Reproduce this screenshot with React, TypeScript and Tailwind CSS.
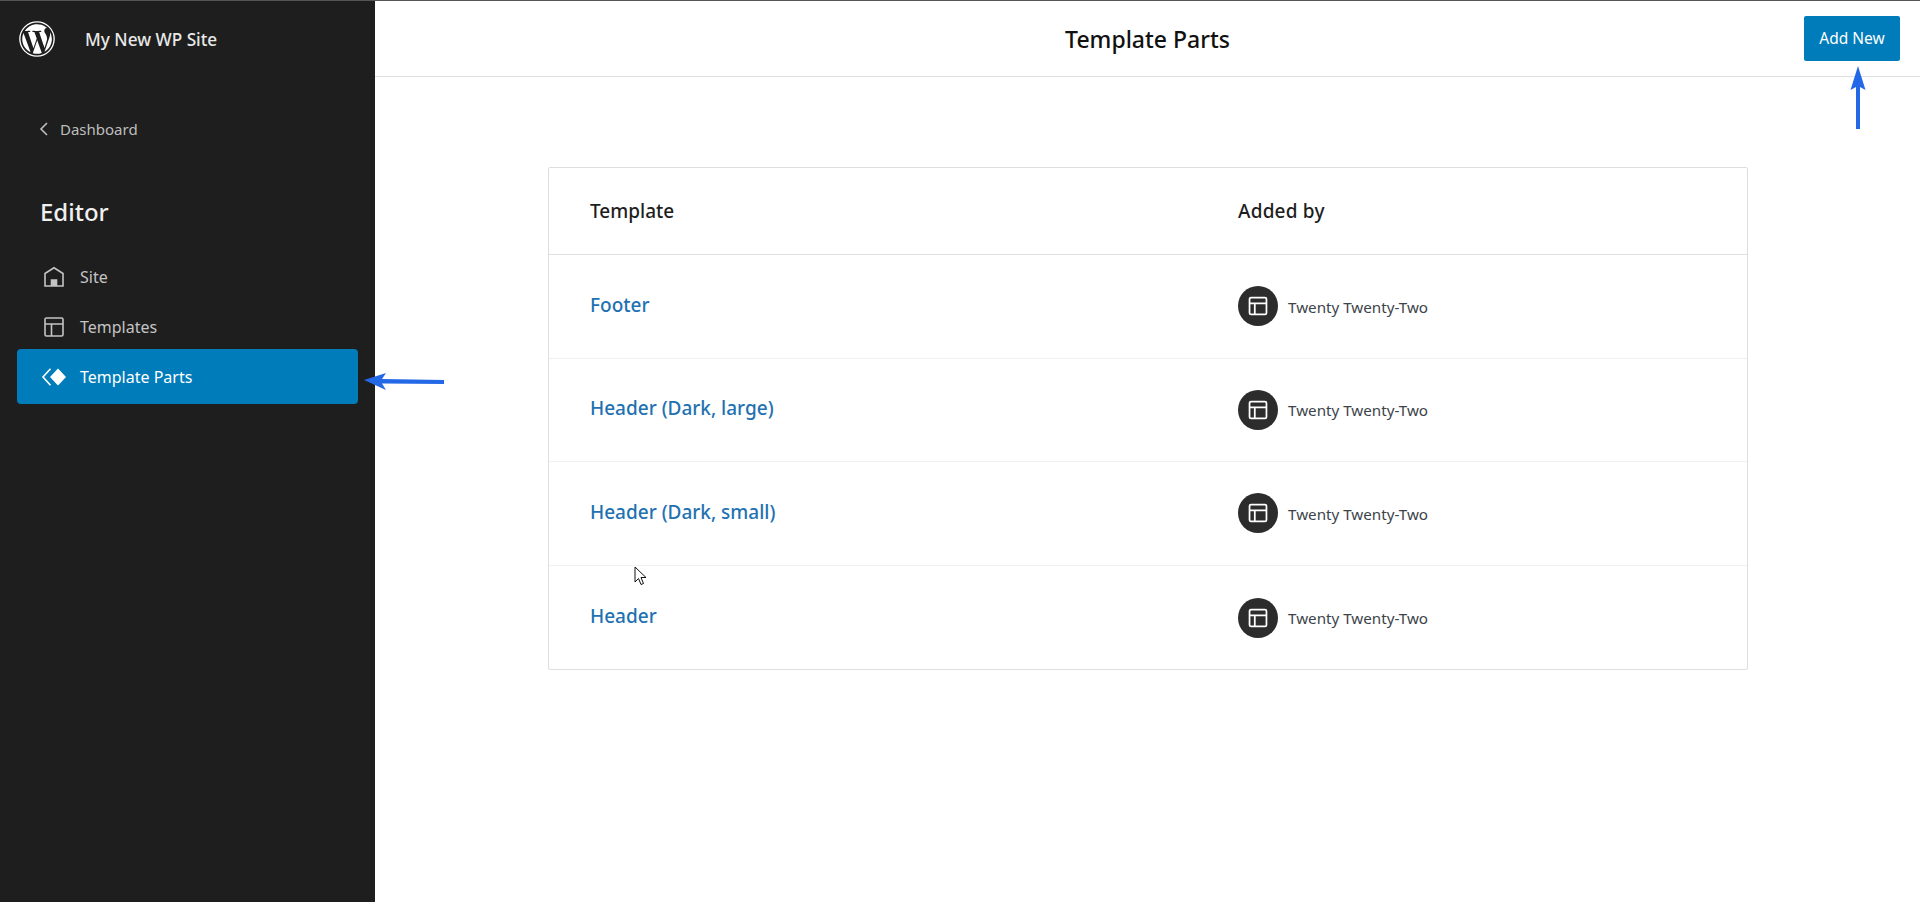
const FONT = 'font-["Noto_Sans","Liberation_Sans",sans-serif]'

function LayoutIcon({ className }: { className: string }) {
  return (
    <svg viewBox="0 0 24 24" className={className} fill="currentColor">
      <path d="M18 5.500H6a.5.5 0 0 0-.5.5v3h13V6a.5.5 0 0 0-.5-.5Zm.5 5H10v8h8a.5.5 0 0 0 .5-.5v-7.500Zm-10 0h-3V18a.5.5 0 0 0 .5.5h2.500v-8ZM6 4h12a2 2 0 0 1 2 2v12a2 2 0 0 1-2 2H6a2 2 0 0 1-2-2V6a2 2 0 0 1 2-2Z" />
    </svg>
  )
}

function WpLogo() {
  return (
    <svg viewBox="0 0 80 80" className="h-[38px] w-[38px]" fill="#fff">
      <path d="M40 2.500a37.500 37.500 0 1 0 0 75 37.500 37.500 0 0 0 0-75Zm0 2.800a34.700 34.700 0 1 1 0 69.400 34.700 34.700 0 0 1 0-69.400Z" />
      <path d="M8.900 40c0 12.300 7.200 23 17.600 28L11.600 27.300A31 31 0 0 0 8.900 40Zm52.100-1.600c0-3.800-1.400-6.500-2.600-8.600-1.600-2.600-3.100-4.800-3.100-7.400 0-2.900 2.200-5.600 5.300-5.600h.4A31 31 0 0 0 14.200 23h2c3.300 0 8.300-.4 8.300-.4 1.700-.1 1.900 2.400.2 2.600 0 0-1.700.2-3.600.3l11.400 34 6.900-20.600-4.900-13.400c-1.700-.1-3.300-.3-3.300-.3-1.700-.1-1.500-2.700.2-2.600 0 0 5.200.4 8.200.4 3.300 0 8.300-.4 8.300-.4 1.700-.1 1.900 2.400.2 2.600 0 0-1.700.2-3.600.3l11.300 33.700 3.100-10.500c1.400-4.400 2.400-7.500 2.400-10.300ZM40.500 42.700l-9.400 27.200a31 31 0 0 0 19-.5l-.2-.4-9.400-26.300Zm26.900-17.700c.1 1 .2 2.100.2 3.200 0 3.200-.6 6.700-2.400 11.200l-9.500 27.500A31 31 0 0 0 67.400 25Z" />
    </svg>
  )
}

function NavItem({ label, icon, active }: { label: string; icon: React.ReactNode; active?: boolean }) {
  return (
    <div
      className={`flex h-[55px] items-center rounded-[4px] pl-[24px] text-[16px] ${
        active ? 'bg-[#007cba] text-white' : 'text-[#c4c4c4]'
      }`}
    >
      <span className="mr-[13px] flex h-[24px] w-[26px] items-center justify-center">{icon}</span>
      {label}
    </div>
  )
}

const rows = ['Footer', 'Header (Dark, large)', 'Header (Dark, small)', 'Header']

export default function App() {
  return (
    <div className={`${FONT} relative flex h-[902px] w-[1920px] overflow-hidden border-t border-[#555] bg-white`}>
      <aside className="flex w-[375px] shrink-0 flex-col bg-[#1e1e1e]">
        <div className="flex h-[76px] items-center pl-[18px]">
          <WpLogo />
          <span className="mt-[1px] ml-[29px] text-[17.200px] font-medium text-[#e8e8e8]">My New WP Site</span>
        </div>
        <div className="mt-[37px] flex h-[30px] items-center pl-[38px] text-[15px] text-[#bdbdbd]">
          <svg viewBox="0 0 12 16" className="mr-[10px] h-[16px] w-[12px]" fill="none" stroke="#bdbdbd" strokeWidth="1.600">
            <path d="M9 2 3 8l6 6" />
          </svg>
          Dashboard
        </div>
        <h2 className="mt-[53px] pl-[40px] text-[24px] leading-[30px] font-medium text-[#f0f0f0]">Editor</h2>
        <nav className="mt-[22px] flex flex-col pr-[17px] pl-[17px]">
          <div className="-mb-[5px]">
            <NavItem
              label="Site"
              icon={
                <svg viewBox="0 0 24 24" className="h-[24px] w-[24px]" fill="none" stroke="#c4c4c4" strokeWidth="1.600">
                  <path d="M3 21V8.500L12 2.800l9 5.700V21Z" />
                  <path d="M9.500 21v-6h5v6" fill="#c4c4c4" />
                </svg>
              }
            />
          </div>
          <div className="-mb-[5px]">
            <NavItem
              label="Templates"
              icon={
                <svg viewBox="0 0 24 24" className="h-[24px] w-[24px]" fill="none" stroke="#c4c4c4" strokeWidth="1.600">
                  <rect x="3" y="3" width="18" height="18" rx="1.500" />
                  <path d="M3 9h18M9.500 9v12" />
                </svg>
              }
            />
          </div>
          <NavItem
            label="Template Parts"
            active
            icon={
              <svg viewBox="0 0 26 24" className="h-[24px] w-[26px]" fill="#fff">
                <path d="m17 3.500 8 8.500-8 8.500L9 12Z" />
                <path d="M9.500 3.800 2 12l7.500 8.200" fill="none" stroke="#fff" strokeWidth="1.600" />
              </svg>
            }
          />
        </nav>
      </aside>

      <main className="flex min-w-0 flex-1 flex-col">
        <header className="relative flex h-[76px] shrink-0 items-center justify-center border-b border-[#e0e0e0]">
          <h1 className="mt-[2px] text-[23px] font-medium text-[#111]">Template Parts</h1>
          <button className="absolute top-[15px] right-[20px] h-[45px] w-[96px] rounded-[2px] bg-[#007cba] pt-[1px] text-[15.500px] text-white">
            Add New
          </button>
        </header>

        <div className="flex justify-center pt-[90px] pl-[1px]">
          <div className="w-[1200px] rounded-[2px] border border-[#dedede]">
            <div className="flex h-[87px] items-center border-b border-[#e0e0e0] pt-[1px] pl-[41px] text-[19px] font-medium text-[#1e1e1e]">
              <span className="w-[648px]">Template</span>
              <span className="tracking-[0.2px]">Added by</span>
            </div>
            {rows.map((row, i) => (
              <div
                key={row}
                className={`flex h-[103.600px] items-center pl-[41px] ${i < rows.length - 1 ? 'border-b border-[#f0f0f0]' : ''}`}
              >
                <span className="-mt-[3px] w-[648px] text-[19px] font-medium text-[#2271b1]">{row}</span>
                <span className="flex h-[40px] w-[40px] items-center justify-center rounded-full bg-[#2c2c2c] text-white">
                  <LayoutIcon className="h-[28px] w-[28px]" />
                </span>
                <span className="mt-[2px] ml-[10px] text-[15.200px] text-[#3c434a]">Twenty Twenty-Two</span>
              </div>
            ))}
          </div>
        </div>
      </main>

      {/* annotation arrows and pointer from the screenshot */}
      <svg viewBox="0 0 82 18" className="absolute top-[371px] left-[363px] h-[18px] w-[82px]" fill="#2368e6">
        <path d="M1 8 23 1l-4 6 62 1v4l-62-.5 4 6.500Z" />
      </svg>
      <svg viewBox="0 0 20 64" className="absolute top-[64px] left-[1848px] h-[64px] w-[20px]" fill="#2368e6">
        <path d="m10 1 7.500 24-5.500-3V64H8V22l-5.500 3Z" />
      </svg>
      <svg viewBox="0 0 14 20" className="absolute top-[565px] left-[634px] h-[20px] w-[14px]" fill="#fff" stroke="#111" strokeWidth="1">
        <path d="M1 1v15l3.500-3.500 2.500 6 2.500-1-2.500-6H12Z" />
      </svg>
    </div>
  )
}
